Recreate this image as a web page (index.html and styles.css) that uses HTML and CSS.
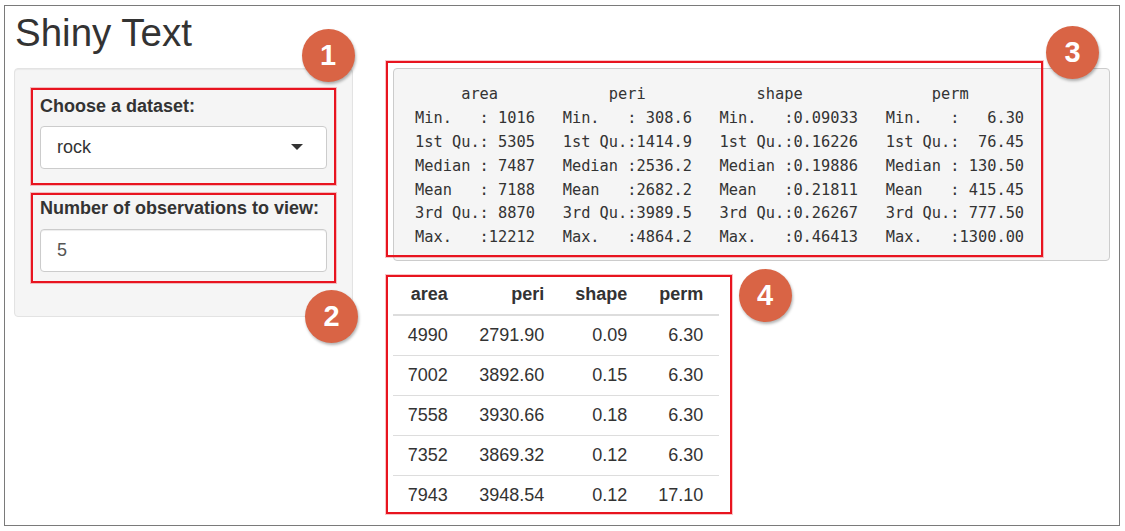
FILE: index.html
```html
<!DOCTYPE html>
<html lang="en">
<head>
<meta charset="utf-8">
<title>Shiny Text</title>
<link rel="stylesheet" href="styles.css">
</head>
<body>
<div class="frame">
  <div class="app">
    <h1 class="title">Shiny Text</h1>
    <div class="layout">
      <aside class="well">
        <div class="group group-first">
          <label class="label">Choose a dataset:</label>
          <div class="select"><span>rock</span><span class="caret"></span></div>
        </div>
        <div class="group group-second">
          <label class="label">Number of observations to view:</label>
          <div class="input">5</div>
        </div>
      </aside>
      <main class="main">
        <div class="summary-wrap">
<pre class="summary">      area            peri            shape              perm
 Min.   : 1016   Min.   : 308.6   Min.   :0.09033   Min.   :   6.30
 1st Qu.: 5305   1st Qu.:1414.9   1st Qu.:0.16226   1st Qu.:  76.45
 Median : 7487   Median :2536.2   Median :0.19886   Median : 130.50
 Mean   : 7188   Mean   :2682.2   Mean   :0.21811   Mean   : 415.45
 3rd Qu.: 8870   3rd Qu.:3989.5   3rd Qu.:0.26267   3rd Qu.: 777.50
 Max.   :12212   Max.   :4864.2   Max.   :0.46413   Max.   :1300.00</pre>
          <div class="mark mark-summary"></div>
        </div>
        <div class="table-box">
          <table class="data">
            <colgroup>
              <col class="c-area"><col class="c-peri"><col class="c-shape"><col class="c-perm">
            </colgroup>
            <thead>
              <tr><th>area</th><th>peri</th><th>shape</th><th>perm</th></tr>
            </thead>
            <tbody>
              <tr><td>4990</td><td>2791.90</td><td>0.09</td><td>6.30</td></tr>
              <tr><td>7002</td><td>3892.60</td><td>0.15</td><td>6.30</td></tr>
              <tr><td>7558</td><td>3930.66</td><td>0.18</td><td>6.30</td></tr>
              <tr><td>7352</td><td>3869.32</td><td>0.12</td><td>6.30</td></tr>
              <tr><td>7943</td><td>3948.54</td><td>0.12</td><td>17.10</td></tr>
            </tbody>
          </table>
        </div>
      </main>
    </div>
  </div>
  <span class="badge badge-1">1</span>
  <span class="badge badge-2">2</span>
  <span class="badge badge-3">3</span>
  <span class="badge badge-4">4</span>
</div>
</body>
</html>
```
FILE: styles.css
```css
html, body {
  margin: 0;
  padding: 0;
  background: #ffffff;
}

body {
  font-family: "Liberation Sans", Arial, sans-serif;
  color: #333333;
}

.frame {
  position: relative;
  box-sizing: border-box;
  width: 1116px;
  height: 521px;
  margin: 5px 0 0 4px;
  border: 1px solid #7a7a7a;
  background: #ffffff;
  overflow: hidden;
}

.app {
  padding: 0 9px;
}

.title {
  margin: 5.4px 0 12.6px 1px;
  font-size: 38.5px;
  line-height: 44px;
  font-weight: normal;
  color: #333333;
}

.layout {
  display: flex;
  align-items: flex-start;
  gap: 40px;
}

.well {
  box-sizing: border-box;
  width: 339px;
  flex: none;
  padding: 19px 16px 33px;
  background: #f5f5f5;
  border: 1px solid #e3e3e3;
  border-radius: 4px;
  box-shadow: inset 0 1px 1px rgba(0, 0, 0, 0.05);
}

.group {
  border: 2px solid #e8141f;
  box-shadow: 0 0 0 1px rgba(232, 20, 31, 0.25);
  padding: 0 7px;
}

.group-first {
  padding-top: 6px;
  padding-bottom: 14px;
}

.group-first .label {
  margin-bottom: 10px;
}

.group-second {
  margin-top: 8px;
  padding-top: 3px;
  padding-bottom: 9px;
}

.group-second .label {
  margin-bottom: 11px;
}

.label {
  display: block;
  font-size: 18px;
  line-height: 20px;
  font-weight: bold;
  color: #333333;
  white-space: nowrap;
}

.select,
.input {
  box-sizing: border-box;
  display: flex;
  align-items: center;
  height: 43px;
  padding: 0 16px;
  background: #ffffff;
  border: 1px solid #cccccc;
  border-radius: 4px;
  font-size: 18px;
  line-height: 20px;
}

.select {
  color: #333333;
}

.input {
  color: #555555;
  box-shadow: inset 0 1px 1px rgba(0, 0, 0, 0.075);
}

.caret {
  margin-left: auto;
  margin-right: 7px;
  width: 0;
  height: 0;
  border-left: 6.5px solid transparent;
  border-right: 6.5px solid transparent;
  border-top: 6px solid #333333;
}

.main {
  flex: 1;
  min-width: 0;
}

.summary-wrap {
  position: relative;
}

.summary {
  box-sizing: border-box;
  margin: 0;
  padding: 14.3px 11.8px 9.9px;
  background: #f5f5f5;
  border: 1px solid #cccccc;
  border-radius: 4px;
  font-family: "DejaVu Sans Mono", "Liberation Mono", monospace;
  font-size: 15.33px;
  line-height: 23.83px;
  color: #333333;
  white-space: pre;
}

.mark {
  position: absolute;
  box-sizing: border-box;
  border: 2px solid #e8141f;
  box-shadow: 0 0 0 1px rgba(232, 20, 31, 0.25);
  pointer-events: none;
}

.mark-summary {
  left: -7px;
  top: -7px;
  width: 657px;
  height: 196px;
}

.table-box {
  width: fit-content;
  margin: 14px 0 0 -7px;
  padding: 0 11px 1px 5px;
  border: 2px solid #e8141f;
  box-shadow: 0 0 0 1px rgba(232, 20, 31, 0.25);
}

.data {
  table-layout: fixed;
  width: 326px;
  border-collapse: separate;
  border-spacing: 0;
  font-size: 18px;
  line-height: 20px;
  color: #333333;
}

.c-area { width: 70.4px; }
.c-peri { width: 96.6px; }
.c-shape { width: 83px; }
.c-perm { width: 76px; }

.data th,
.data td {
  text-align: right;
  vertical-align: top;
  padding: 9px 15.7px 10px 0;
  white-space: nowrap;
}

.data th {
  padding-top: 7px;
  padding-bottom: 10px;
  font-weight: bold;
  border-bottom: 2px solid #dddddd;
}

.data tbody tr + tr td {
  border-top: 1px solid #dddddd;
}

.data tbody tr:last-child td {
  padding-bottom: 6px;
}

.badge {
  position: absolute;
  width: 53px;
  height: 53px;
  border-radius: 50%;
  background: #d96445;
  color: #ffffff;
  font-family: "Liberation Sans", Arial, sans-serif;
  font-weight: bold;
  font-size: 29px;
  display: flex;
  align-items: center;
  justify-content: center;
  box-shadow: 1px 2px 3px rgba(0, 0, 0, 0.3);
}

.badge-1 { left: 296.5px; top: 23px; }
.badge-2 { left: 300.2px; top: 283.8px; }
.badge-3 { left: 1041.2px; top: 20.2px; }
.badge-4 { left: 733.5px; top: 263px; }
```
